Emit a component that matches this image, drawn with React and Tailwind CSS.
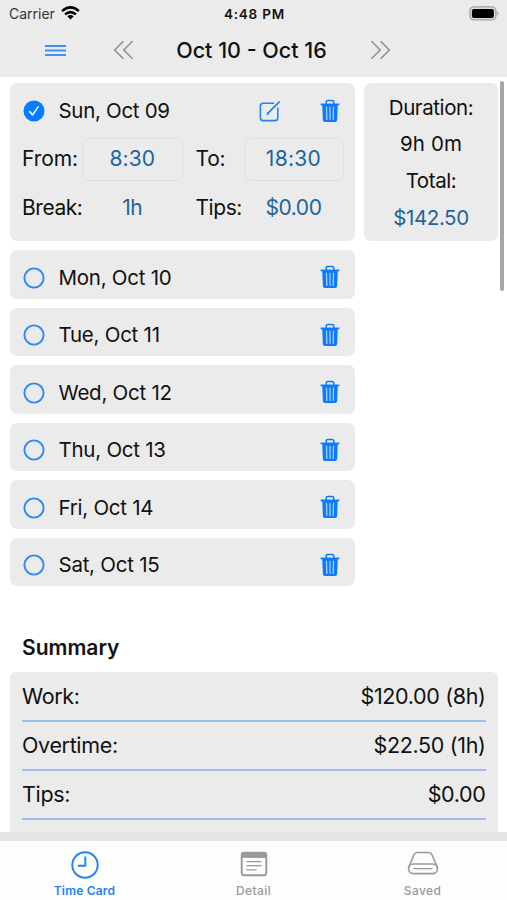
import React from "react";

const days = ["Mon, Oct 10", "Tue, Oct 11", "Wed, Oct 12", "Thu, Oct 13", "Fri, Oct 14", "Sat, Oct 15"];

const summary = [
  ["Work:", "$120.00 (8h)"],
  ["Overtime:", "$22.50 (1h)"],
  ["Tips:", "$0.00"],
];

function Trash() {
  return (
    <svg className="-mt-px h-[24px] w-[20px] shrink-0" viewBox="0 0 20 24" fill="none" stroke="#0a7aff">
      <path d="M6.2 5V3.2Q6.2 1.4 8 1.4h4q1.8 0 1.8 1.8V5" strokeWidth="1.5" />
      <path d="M.6 5.4h18.8" strokeWidth="1.7" />
      <path d="M2.2 5.5h15.6l-.7 15.6q-.1 2-2 2H4.9q-1.9 0-2-2z" fill="#0a7aff" stroke="none" />
      <path d="M6.5 8.2l.3 12.2M10 8.2v12.2M13.5 8.2l-.3 12.2" stroke="#a9cff9" strokeWidth="1.3" strokeLinecap="round" />
    </svg>
  );
}

function Edit() {
  return (
    <svg className="h-[22px] w-[22px] shrink-0" viewBox="0 0 22 22" fill="none" stroke="#1e86f8" strokeWidth="1.6" strokeLinecap="round">
      <path d="M14.5 3.3H4.2Q1.4 3.3 1.4 6v12q0 2.6 2.8 2.6h12q2.6 0 2.6-2.6V8" />
      <path d="M9 13.2l9.3-9.3" strokeWidth="1.8" />
      <path d="M7.8 14.6l.7-1.9 1.2 1.2z" fill="#1e86f8" strokeWidth=".6" />
      <path d="M19.4 2.7l.6-.6" strokeWidth="2" />
    </svg>
  );
}

function Chevrons({ flip }) {
  return (
    <svg className={flip ? "h-[20px] w-[21px] -scale-x-100" : "h-[20px] w-[21px]"} viewBox="0 0 21 20" fill="none" stroke="#8f8f8f" strokeWidth="1.5">
      <path d="M10.4 1.3L1.6 10l8.8 8.7M19.6 1.3L10.8 10l8.8 8.7" />
    </svg>
  );
}

function DayRow({ label }) {
  return (
    <div className="flex h-[48.5px] items-center rounded-[7px] bg-[#ebebeb] pt-[7px] pr-[15px] pl-[13px]">
      <svg className="h-[22px] w-[22px]" viewBox="0 0 22 22">
        <circle cx="11" cy="11" r="9.6" fill="none" stroke="#2b8af7" strokeWidth="1.9" />
      </svg>
      <span className="ml-[14px] flex-1 text-[20.5px] leading-6 tracking-[-0.25px]">{label}</span>
      <Trash />
    </div>
  );
}

function Tab({ label, active, children }) {
  return (
    <div className={active ? "flex flex-1 flex-col items-center text-[#1f83f5]" : "flex flex-1 flex-col items-center text-[#999999]"}>
      <svg className="mt-[9px] h-[30px] w-[34px]" viewBox="0 0 34 30" fill="none" stroke="currentColor" strokeWidth="1.9" strokeLinecap="round" strokeLinejoin="round">
        {children}
      </svg>
      <span className={active ? "mt-[3px] text-[12px] font-semibold leading-4 tracking-[0.2px]" : "mt-[3px] text-[12px] font-medium leading-4 tracking-[0.4px]"}>{label}</span>
    </div>
  );
}

export default function App() {
  return (
    <div className="flex h-[900px] w-[507px] flex-col overflow-hidden bg-white font-['Inter','Liberation_Sans',sans-serif] text-[#111111]">
      <header className="h-[76.5px] shrink-0 bg-[#ebebeb]">
        <div className="grid h-[27px] grid-cols-3 items-center pr-[7px] pl-[9px]">
          <div className="flex items-center gap-[6px] text-[14px] leading-5 text-[#333333]">
            Carrier
            <svg className="-mt-[2px] h-[14px] w-[19px]" viewBox="0 0 19 14" fill="none" stroke="#000" strokeWidth="2.5">
              <path d="M1.1 5.1q8.4-7.4 16.8 0M4.1 8.4q5.4-4.6 10.8 0" />
              <path d="M6.3 10.2q3.2-2.6 6.4 0L9.5 13.6z" fill="#000" stroke="none" />
            </svg>
          </div>
          <div className="text-center text-[13.5px] font-semibold leading-5 tracking-[0.8px] whitespace-nowrap">4:48 PM</div>
          <svg className="-mt-px h-[15px] w-[31px] justify-self-end" viewBox="0 0 31 15">
            <rect x=".9" y=".9" width="26" height="13" rx="4" fill="#ddd" stroke="#a3a3a3" strokeWidth="1.3" />
            <rect x="2.9" y="2.9" width="22" height="9" rx="2" fill="#000" />
            <path d="M28.3 5q2.4 2.5 0 5z" fill="#a3a3a3" />
          </svg>
        </div>
        <div className="flex h-[46px] items-center pl-[45px]">
          <svg className="h-[13px] w-[21px]" viewBox="0 0 21 13" stroke="#3d92f3" strokeWidth="1.8">
            <path d="M0 2h21M0 6.5h21M0 11h21" />
          </svg>
          <div className="ml-[46.5px]"><Chevrons /></div>
          <div className="w-[236px] text-center text-[21.5px] font-medium leading-7 whitespace-nowrap">Oct 10 - Oct 16</div>
          <Chevrons flip />
        </div>
      </header>

      <main className="relative h-[755.5px] shrink-0 overflow-hidden pt-[6.5px] pr-[9px] pl-[9.5px]">
        <div className="absolute top-[4px] left-[499.5px] h-[210px] w-[4px] rounded-full bg-[#a5a5a5]" />
        <div className="flex items-start gap-[9px]">
          <div className="flex w-[345.5px] flex-col gap-[9px]">
            <section className="h-[158px] rounded-[7px] bg-[#ebebeb] pt-[16px]">
              <div className="flex h-[24px] items-center pr-[15px] pl-[13px]">
                <svg className="h-[22px] w-[22px]" viewBox="0 0 22 22" fill="none">
                  <circle cx="11" cy="11" r="10.5" fill="#087bff" />
                  <path d="M6.6 11.6l3 3.3 5.5-8" stroke="#fff" strokeWidth="1.5" strokeLinecap="round" strokeLinejoin="round" />
                </svg>
                <span className="ml-[14px] flex-1 text-[20.5px] leading-6 tracking-[-0.3px]">Sun, Oct 09</span>
                <Edit />
                <div className="ml-[39px]"><Trash /></div>
              </div>
              <div className="mt-[14.5px] grid grid-cols-[60px_100.5px_61px_100px] grid-rows-[43px_55px] items-center pl-[12.5px] text-[21px] leading-6 tracking-[-0.45px]">
                <span className="tracking-[-0.1px]">From:</span>
                <span className="flex h-[43px] items-center justify-center rounded-[7px] border border-[#dfdfdf] tracking-[0.1px] text-[#20659f]">8:30</span>
                <span className="pl-[13px] tracking-[-0.2px]">To:</span>
                <span className="flex h-[43px] items-center justify-center rounded-[7px] border border-[#dfdfdf] tracking-[0.3px] text-[#20659f]">18:30</span>
                <span>Break:</span>
                <span className="text-center text-[#20659f]">1h</span>
                <span className="pl-[13px]">Tips:</span>
                <span className="text-center text-[#20659f]">$0.00</span>
              </div>
            </section>
            {days.map((d) => <DayRow key={d} label={d} />)}
          </div>
          <aside className="flex h-[158px] w-[134px] flex-col items-center rounded-[7px] bg-[#ebebeb] pt-[6.5px] text-[20.5px] leading-[36.7px] tracking-[-0.4px]">
            <span>Duration:</span>
            <span className="tracking-[0.1px]">9h 0m</span>
            <span>Total:</span>
            <span className="text-[#20659f]">$142.50</span>
          </aside>
        </div>
        <h2 className="mt-[47.5px] ml-[12.5px] text-[21px] font-semibold leading-7">Summary</h2>
        <section className="mt-[10px] h-[180px] rounded-t-[6px] bg-[#ebebeb] px-[12.5px] pt-[1px]">
          {summary.map(([k, v]) => (
            <div key={k} className="flex h-[49px] items-center justify-between border-b-2 border-[#9bc1ea] text-[21.5px] tracking-[-0.35px]">
              <span>{k}</span>
              <span>{v}</span>
            </div>
          ))}
        </section>
      </main>

      <div className="h-[9px] shrink-0 bg-[#e6e6e6]" />
      <nav className="flex flex-1 bg-[#fdfdfd]">
        <Tab label="Time Card" active>
          <circle cx="17" cy="15" r="12.7" />
          <path d="M17.3 6.5v9.2H9.8" strokeLinecap="butt" />
        </Tab>
        <Tab label="Detail">
          <rect x="4.7" y="2.8" width="24.6" height="22.4" rx="2.5" />
          <path d="M4.5 7V5q0-2.2 2.2-2.2h20.6q2.2 0 2.2 2.2v2z" fill="currentColor" strokeWidth="1" />
          <path d="M10 11.6h14M10 15.7h14M10 19.8h9" strokeWidth="1.3" />
        </Tab>
        <Tab label="Saved">
          <path d="M2.8 17L8 4.8q1-2.3 3.3-2.3h11.4q2.3 0 3.3 2.3L31.2 17" strokeWidth="1.6" />
          <rect x="2.5" y="14" width="29" height="9.6" rx="4.8" strokeWidth="1.6" />
          <path d="M8 18.6h18" strokeWidth="1.4" />
        </Tab>
      </nav>
    </div>
  );
}
